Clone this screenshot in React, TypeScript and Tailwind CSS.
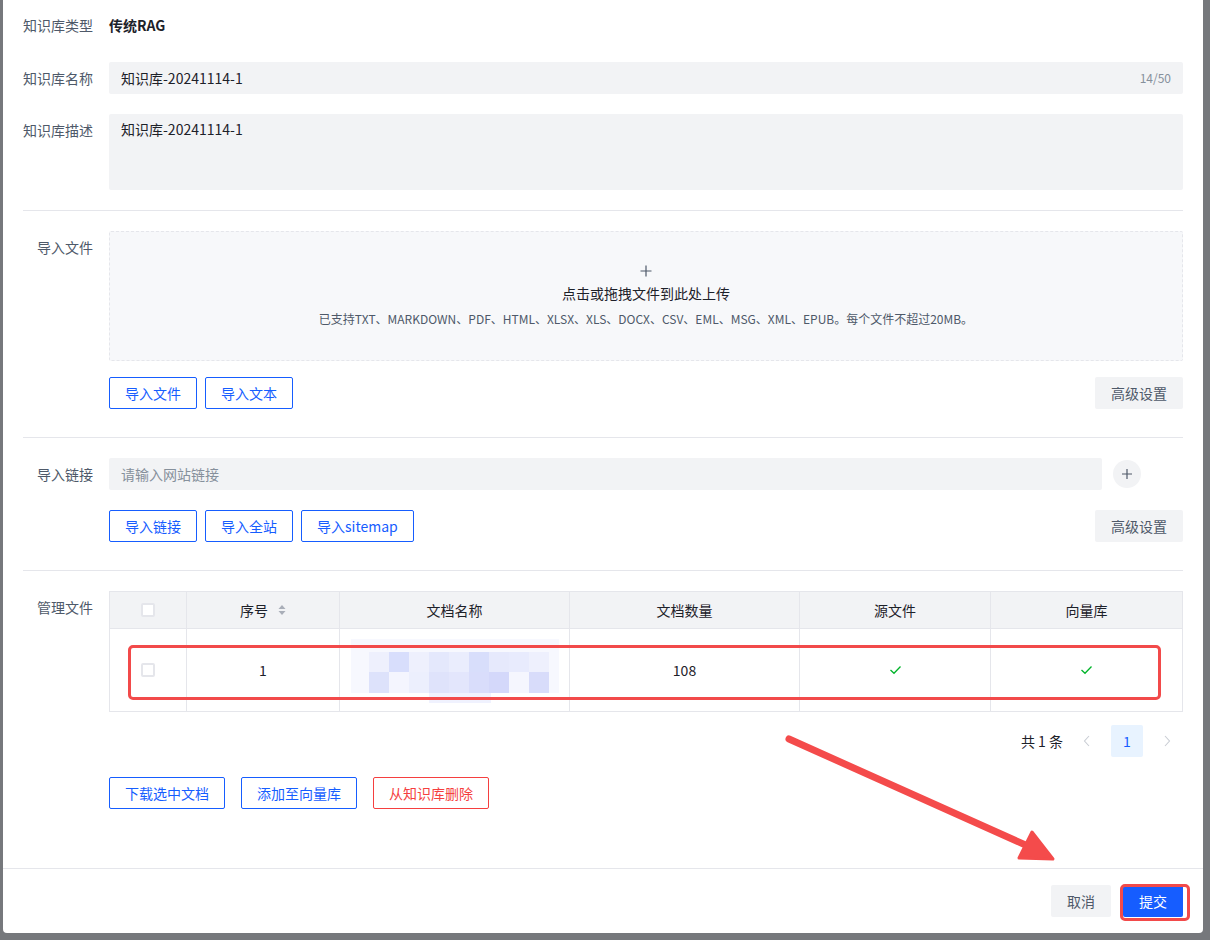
import React from 'react';

function Row({ label, children }: { label: string; children: React.ReactNode }) {
  return (
    <div className="flex gap-4">
      <div className="w-[70px] shrink-0 text-right text-sm leading-8 text-[#4e5969]">{label}</div>
      <div className="flex-1 min-w-0">{children}</div>
    </div>
  );
}

function OutlineButton({ children, danger }: { children: React.ReactNode; danger?: boolean }) {
  return (
    <button
      className={
        danger
          ? 'h-8 px-[15px] rounded-[2px] border border-[#f53f3f] bg-white text-sm text-[#f53f3f]'
          : 'h-8 px-[15px] rounded-[2px] border border-[#165dff] bg-white text-sm text-[#165dff]'
      }
    >
      {children}
    </button>
  );
}

function GrayButton({ children }: { children: React.ReactNode }) {
  return (
    <button className="h-8 px-4 rounded-[2px] bg-[#f2f3f5] text-sm text-[#4e5969]">{children}</button>
  );
}

function Divider() {
  return <div className="h-px bg-[#e5e6eb]" />;
}

function Checkbox() {
  return <div className="w-[14px] h-[14px] rounded-[2px] border-2 border-[#e5e6eb] bg-white" />;
}

function Check() {
  return (
    <svg width="13" height="10" viewBox="0 0 13 10" fill="none">
      <path d="M1.5 5 L5 8.3 L11.5 1.5" stroke="#00b42a" strokeWidth="1.3" />
    </svg>
  );
}

function Mosaic() {
  const rowB = ['#eef0fd', '#d8defc', '#eef0fd', '#e4e8fc', '#eaedfd', '#d8defb', '#e6e9fc', '#e8ebfd', '#eef0fd'];
  const rowC = ['#dde2fb', '#f4f5fe', '#eceffd', '#dfe3fb', '#e3e6fc', '#d9ddfb', '#d4d8fa', '#f5f6fe', '#d8dcfa'];
  return (
    <svg width="208" height="83" viewBox="0 0 208 83">
      <rect x="0" y="10" width="208" height="54" fill="#f7f8fe" />
      {rowB.map((c, i) => (
        <rect key={'b' + i} x={18 + i * 20} y="23" width="20" height="20" fill={c} />
      ))}
      {rowC.map((c, i) => (
        <rect key={'c' + i} x={18 + i * 20} y="43" width="20" height="21" fill={c} />
      ))}
      <rect x="78" y="64" width="62" height="10" fill="#f0f2fe" />
    </svg>
  );
}

function Chevron({ dir }: { dir: 'left' | 'right' }) {
  return (
    <svg width="8" height="12" viewBox="0 0 8 12" fill="none">
      <path d={dir === 'left' ? 'M6 1 L1.5 6 L6 11' : 'M2 1 L6.5 6 L2 11'} stroke="#c9cdd4" strokeWidth="1.1" />
    </svg>
  );
}

export default function App() {
  const cols = ['w-[77px]', 'w-[153px]', 'w-[230px]', 'w-[230px]', 'w-[191px]', 'flex-1'];
  return (
    <div className="relative w-[1210px] h-[940px] overflow-hidden bg-[#76787c] font-['Noto_Sans_CJK_SC',sans-serif] text-[#1d2129]">
      <div className="flex pl-[3px] pr-[7px]">
        <div className="w-[1200px] h-[933px] bg-white rounded-b-[4px] flex flex-col">
          <div className="px-5 pt-[9px]">
            <Row label="知识库类型">
              <div className="text-sm leading-8 font-bold text-[#1d2129]">传统RAG</div>
            </Row>
            <div className="mt-[21px]">
              <Row label="知识库名称">
                <div className="h-8 bg-[#f2f3f5] rounded-[2px] px-3 flex items-center justify-between">
                  <span className="text-sm">知识库-20241114-1</span>
                  <span className="text-xs text-[#86909c]">14/50</span>
                </div>
              </Row>
            </div>
            <div className="mt-5">
              <Row label="知识库描述">
                <div className="h-[76px] bg-[#f2f3f5] rounded-[2px] px-3 py-[4px] text-sm leading-[22px]">
                  知识库-20241114-1
                </div>
              </Row>
            </div>
            <div className="mt-5 mb-5">
              <Divider />
            </div>
            <Row label="导入文件">
              <div className="h-[130px] rounded-[2px] border border-dashed border-[#e5e6eb] bg-[#f7f8fa] flex flex-col items-center justify-center">
                <svg width="12" height="12" viewBox="0 0 12 12" className="mt-[1px]">
                  <path d="M6 0.5 V11.5 M0.5 6 H11.5" stroke="#4e5969" strokeWidth="1.2" />
                </svg>
                <div className="mt-[6px] text-sm leading-5 text-[#1d2129]">点击或拖拽文件到此处上传</div>
                <div className="mt-[6px] text-xs leading-5 text-[#4e5969]">
                  已支持TXT、MARKDOWN、PDF、HTML、XLSX、XLS、DOCX、CSV、EML、MSG、XML、EPUB。每个文件不超过20MB。
                </div>
              </div>
              <div className="mt-4 flex items-center gap-2">
                <OutlineButton>导入文件</OutlineButton>
                <OutlineButton>导入文本</OutlineButton>
                <div className="ml-auto">
                  <GrayButton>高级设置</GrayButton>
                </div>
              </div>
            </Row>
            <div className="mt-7 mb-5">
              <Divider />
            </div>
            <Row label="导入链接">
              <div className="flex items-center">
                <div className="w-[993px] h-8 bg-[#f2f3f5] rounded-[2px] px-3 flex items-center text-sm text-[#86909c]">
                  请输入网站链接
                </div>
                <div className="ml-[11px] w-7 h-7 rounded-full bg-[#f2f3f5] flex items-center justify-center">
                  <svg width="12" height="12" viewBox="0 0 12 12">
                    <path d="M6 1 V11 M1 6 H11" stroke="#4e5969" strokeWidth="1.2" />
                  </svg>
                </div>
              </div>
              <div className="mt-5 flex items-center gap-2">
                <OutlineButton>导入链接</OutlineButton>
                <OutlineButton>导入全站</OutlineButton>
                <OutlineButton>导入sitemap</OutlineButton>
                <div className="ml-auto">
                  <GrayButton>高级设置</GrayButton>
                </div>
              </div>
            </Row>
            <div className="mt-7 mb-5">
              <Divider />
            </div>
            <Row label="管理文件">
              <div className="border border-[#e5e6eb] text-sm">
                <div className="flex h-[37px] bg-[#f2f3f5] border-b border-[#e5e6eb]">
                  <div className={cols[0] + ' flex items-center justify-center border-r border-[#e5e6eb]'}>
                    <Checkbox />
                  </div>
                  <div className={cols[1] + ' flex items-center justify-center gap-[10px] border-r border-[#e5e6eb]'}>
                    <span>序号</span>
                    <svg width="8" height="12" viewBox="0 0 8 12">
                      <path d="M4 1 L7.5 5 H0.5 Z M4 11 L7.5 7 H0.5 Z" fill="#a9aeb8" />
                    </svg>
                  </div>
                  <div className={cols[2] + ' flex items-center justify-center border-r border-[#e5e6eb]'}>文档名称</div>
                  <div className={cols[3] + ' flex items-center justify-center border-r border-[#e5e6eb]'}>文档数量</div>
                  <div className={cols[4] + ' flex items-center justify-center border-r border-[#e5e6eb]'}>源文件</div>
                  <div className={cols[5] + ' flex items-center justify-center'}>向量库</div>
                </div>
                <div className="flex h-[82px]">
                  <div className={cols[0] + ' flex items-center justify-center border-r border-[#e5e6eb]'}>
                    <Checkbox />
                  </div>
                  <div className={cols[1] + ' flex items-center justify-center border-r border-[#e5e6eb]'}>1</div>
                  <div className={cols[2] + ' flex items-start justify-center border-r border-[#e5e6eb] overflow-hidden'}>
                    <Mosaic />
                  </div>
                  <div className={cols[3] + ' flex items-center justify-center border-r border-[#e5e6eb]'}>108</div>
                  <div className={cols[4] + ' flex items-center justify-center border-r border-[#e5e6eb]'}>
                    <Check />
                  </div>
                  <div className={cols[5] + ' flex items-center justify-center'}>
                    <Check />
                  </div>
                </div>
              </div>
              <div className="mt-[13px] flex items-center justify-end gap-2 text-sm">
                <span>共 1 条</span>
                <div className="w-8 h-8 flex items-center justify-center">
                  <Chevron dir="left" />
                </div>
                <div className="w-8 h-8 rounded-[2px] bg-[#e8f3ff] text-[#165dff] flex items-center justify-center">1</div>
                <div className="w-8 h-8 flex items-center justify-center">
                  <Chevron dir="right" />
                </div>
              </div>
              <div className="mt-5 flex items-center gap-4">
                <OutlineButton>下载选中文档</OutlineButton>
                <OutlineButton>添加至向量库</OutlineButton>
                <OutlineButton danger>从知识库删除</OutlineButton>
              </div>
            </Row>
          </div>
          <div className="mt-auto border-t border-[#e5e6eb] px-5 pt-4 pb-4 flex justify-end gap-3">
            <button className="h-8 w-[60px] rounded-[2px] bg-[#f2f3f5] text-sm text-[#4e5969]">取消</button>
            <button className="h-8 w-[60px] rounded-[2px] bg-[#165dff] text-sm text-white">提交</button>
          </div>
        </div>
      </div>

      {/* annotation overlays */}
      <div className="absolute left-[128px] top-[645px] w-[1033px] h-[55px] rounded-[5px] border-[3px] border-[#f24a4a]" />
      <div className="absolute left-[1120px] top-[884px] w-[70px] h-[37px] rounded-[5px] border-[3px] border-[#f24a4a]" />
      <svg className="absolute left-0 top-0 pointer-events-none" width="1210" height="940" viewBox="0 0 1210 940">
        <path d="M789 739 L1030 847" stroke="#f44b4b" strokeWidth="7" strokeLinecap="round" />
        <path d="M1053 859 L1019 858 L1032 832 Z" fill="#f44b4b" stroke="#f44b4b" strokeWidth="3" strokeLinejoin="round" />
      </svg>
    </div>
  );
}
